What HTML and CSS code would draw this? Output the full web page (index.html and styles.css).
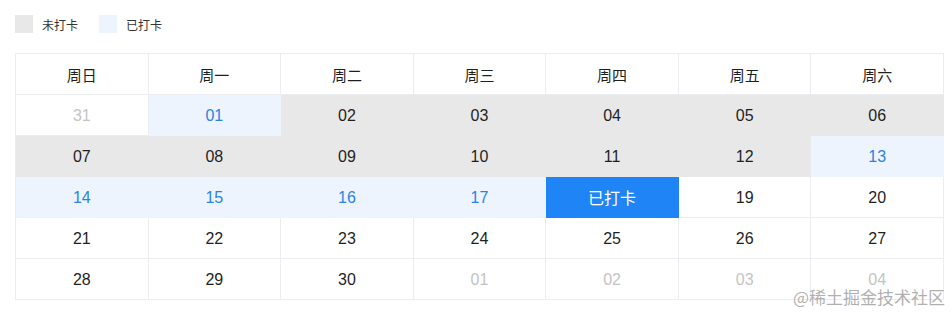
FILE: index.html
```html
<!DOCTYPE html>
<html lang="zh">
<head>
<meta charset="utf-8">
<link rel="stylesheet" href="styles.css">
</head>
<body>
<div class="page">
  <div class="legend">
    <span class="swatch swatch-gray"></span><span class="legend-label">未打卡</span>
    <span class="swatch swatch-blue"></span><span class="legend-label">已打卡</span>
  </div>
  <div class="calendar">
    <div class="cell head">周日</div>
    <div class="cell head">周一</div>
    <div class="cell head">周二</div>
    <div class="cell head">周三</div>
    <div class="cell head">周四</div>
    <div class="cell head">周五</div>
    <div class="cell head">周六</div>

    <div class="cell other">31</div>
    <div class="cell done">01</div>
    <div class="cell miss">02</div>
    <div class="cell miss">03</div>
    <div class="cell miss">04</div>
    <div class="cell miss">05</div>
    <div class="cell miss">06</div>

    <div class="cell miss">07</div>
    <div class="cell miss">08</div>
    <div class="cell miss">09</div>
    <div class="cell miss">10</div>
    <div class="cell miss">11</div>
    <div class="cell miss">12</div>
    <div class="cell done">13</div>

    <div class="cell done">14</div>
    <div class="cell done">15</div>
    <div class="cell done">16</div>
    <div class="cell done">17</div>
    <div class="cell today">已打卡</div>
    <div class="cell">19</div>
    <div class="cell">20</div>

    <div class="cell">21</div>
    <div class="cell">22</div>
    <div class="cell">23</div>
    <div class="cell">24</div>
    <div class="cell">25</div>
    <div class="cell">26</div>
    <div class="cell">27</div>

    <div class="cell">28</div>
    <div class="cell">29</div>
    <div class="cell">30</div>
    <div class="cell other">01</div>
    <div class="cell other">02</div>
    <div class="cell other">03</div>
    <div class="cell other">04</div>
  </div>
  <div class="watermark">@稀土掘金技术社区</div>
</div>
</body>
</html>
```
FILE: styles.css
```css
* { box-sizing: border-box; }
html, body { margin: 0; padding: 0; background: #fff; }
body {
  font-family: "Liberation Sans", "Noto Sans CJK SC", sans-serif;
  color: #1f1f1f;
}
.page {
  position: relative;
  width: 952px;
  height: 314px;
  padding: 15px 0 0 15px;
}
.legend {
  display: flex;
  align-items: center;
  height: 18px;
}
.swatch {
  width: 18px;
  height: 18px;
  margin-right: 9px;
}
.swatch-gray { background: #e8e8e8; }
.swatch-blue { background: #eef4fe; }
.legend-label {
  font-size: 12px;
  color: #333;
  margin-right: 21px;
  font-family: "Noto Sans CJK SC", sans-serif;
}
.calendar {
  margin-top: 20px;
  width: 929px;
  display: grid;
  grid-template-columns: repeat(7, 1fr);
  border-top: 1px solid #ebedf0;
  border-left: 1px solid #ebedf0;
}
.cell {
  height: 41px;
  display: flex;
  align-items: center;
  justify-content: center;
  padding-top: 1px;
  border-right: 1px solid #ebedf0;
  border-bottom: 1px solid #ebedf0;
  font-size: 16px;
  color: #1f1f1f;
  background: #fff;
}
.head {
  font-family: "Noto Sans CJK SC", sans-serif;
  font-size: 15px;
  padding-top: 0;
}
.other { color: #c4c4c4; }
.miss {
  background: #e8e8e8;
  border-color: #e8e8e8;
}
.done {
  background: #eef4fe;
  border-color: #eef4fe;
  color: #2a83e2;
}
.today {
  background: #1f84f5;
  border-color: #1f84f5;
  color: #fff;
  font-family: "Noto Sans CJK SC", sans-serif;
  font-size: 16px;
  padding-top: 0;
}
.watermark {
  position: absolute;
  right: 7px;
  bottom: 7px;
  font-family: "Noto Sans CJK SC", sans-serif;
  font-size: 17px;
  line-height: 20px;
  color: rgba(150, 150, 150, 0.75);
}
```
